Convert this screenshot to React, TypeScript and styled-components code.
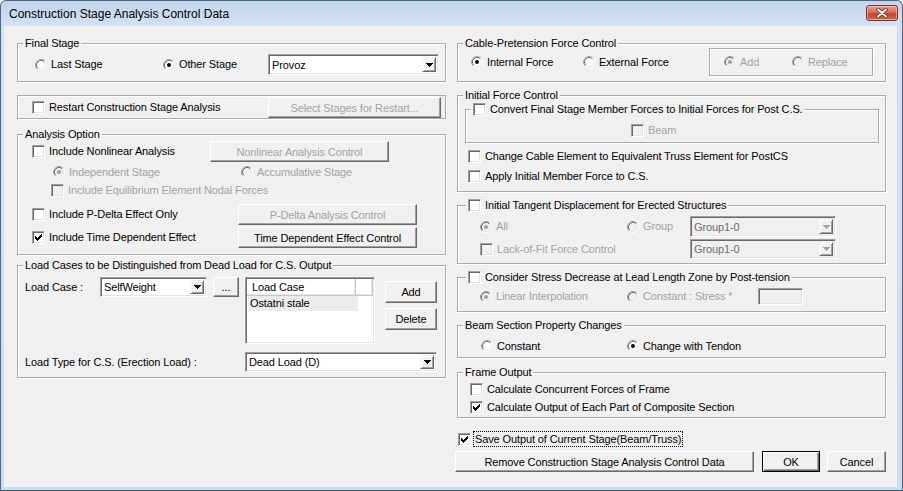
import React from 'react';
import styled, { createGlobalStyle, css } from 'styled-components';

const Global = createGlobalStyle`
  html, body { margin: 0; padding: 0; background: #ffffff; }
  body { font-family: "Liberation Sans", Tahoma, Arial, sans-serif; font-size: 11px; color: #000; letter-spacing: -0.12px; }
  * { box-sizing: border-box; }
`;

const Window = styled.div`
  width: 903px;
  height: 491px;
  display: flex;
  flex-direction: column;
  background: linear-gradient(#c2d5ed, #d2e1f3 24px, #cddced);
  border: 1px solid #52667f;
  border-bottom-color: #2f6070;
  border-radius: 6px 6px 0 0;
  overflow: hidden;
`;

const TitleBar = styled.div`
  height: 25px;
  flex-shrink: 0;
  display: flex;
  align-items: flex-start;
  justify-content: space-between;
  padding: 0 4px 0 8px;
`;

const Title = styled.div`
  font-size: 12px;
  letter-spacing: 0;
  line-height: 26px;
  color: #000;
  white-space: nowrap;
`;

const CloseBtn = styled.div`
  margin-top: 4px;
  width: 32px;
  height: 16px;
  border: 1px solid #7a3325;
  border-radius: 3px;
  background: linear-gradient(#e8a38f, #d0664d 50%, #c04528 55%, #d26a4c);
  box-shadow: inset 0 0 0 1px rgba(255, 220, 210, 0.55);
  display: flex;
  align-items: center;
  justify-content: center;
`;

const Client = styled.div`
  flex: 1;
  margin: 0 5px 3px 3px;
  background: #f0f0f0;
  display: grid;
  grid-template-columns: 429px 429px;
  column-gap: 11px;
  padding-left: 13px;
  align-items: start;
`;

const Col = styled.div`
  display: flex;
  flex-direction: column;
`;

const Group = styled.div<{ $h: number; $mt?: number; $ml?: number; $w?: number }>`
  height: ${p => p.$h}px;
  margin-top: ${p => p.$mt ?? 0}px;
  margin-left: ${p => p.$ml ?? 0}px;
  width: ${p => (p.$w ? `${p.$w}px` : 'auto')};
  flex-shrink: 0;
  border: 1px solid #ababab;
  box-shadow: inset 1px 1px 0 #ffffff, 1px 1px 0 #ffffff;
  display: flex;
  flex-direction: column;
`;

const Legend = styled.div<{ $ml?: number }>`
  margin: -7px 0 0 ${p => p.$ml ?? 5}px;
  padding: 0 2px;
  height: 13px;
  line-height: 13px;
  background: #f0f0f0;
  align-self: flex-start;
  display: flex;
  align-items: center;
  white-space: nowrap;
`;

const Row = styled.div<{ $mt?: number; $pl?: number; $h?: number }>`
  display: flex;
  align-items: center;
  flex-shrink: 0;
  margin-top: ${p => p.$mt ?? 0}px;
  padding-left: ${p => p.$pl ?? 0}px;
  height: ${p => p.$h ?? 16}px;
`;

const Opt = styled.div<{ $w?: number; $dis?: boolean }>`
  display: flex;
  align-items: center;
  gap: 4px;
  flex-shrink: 0;
  width: ${p => (p.$w ? `${p.$w}px` : 'auto')};
  color: ${p => (p.$dis ? '#a3a3a3' : '#000')};
  white-space: nowrap;
  line-height: 13px;
`;

const Box = styled.span<{ $dis?: boolean }>`
  width: 13px;
  height: 13px;
  flex-shrink: 0;
  background: ${p => (p.$dis ? '#f0f0f0' : '#ffffff')};
  border: 1px solid;
  border-color: #a0a0a0 #ffffff #ffffff #a0a0a0;
  box-shadow: inset 1px 1px 0 #696969, inset -1px -1px 0 #e3e3e3;
  display: flex;
  align-items: center;
  justify-content: center;
`;

const Focus = styled.span`
  outline: 1px dotted #000;
  outline-offset: 1px;
`;

const Btn = styled.button<{ $w: number; $h?: number; $def?: boolean }>`
  width: ${p => p.$w}px;
  height: ${p => p.$h ?? 21}px;
  flex-shrink: 0;
  padding: 0;
  margin: 0;
  font: inherit;
  font-size: 11px;
  letter-spacing: -0.12px;
  color: #000;
  background: #f0f0f0;
  border: 1px solid;
  border-color: #ffffff #696969 #696969 #ffffff;
  box-shadow: inset -1px -1px 0 #a0a0a0;
  white-space: nowrap;
  &:disabled {
    color: #a3a3a3;
  }
  ${p =>
    p.$def &&
    css`
      border-color: #000;
      box-shadow: inset 1px 1px 0 #ffffff, inset -1px -1px 0 #696969, inset -2px -2px 0 #a0a0a0;
    `}
`;

const Sunken = styled.div<{ $w: number; $h: number; $dis?: boolean }>`
  width: ${p => p.$w}px;
  height: ${p => p.$h}px;
  flex-shrink: 0;
  background: ${p => (p.$dis ? '#f0f0f0' : '#ffffff')};
  border: 1px solid;
  border-color: #a0a0a0 #ffffff #ffffff #a0a0a0;
  box-shadow: inset 1px 1px 0 #696969, inset -1px -1px 0 #e3e3e3;
  padding: 2px 2px 2px 2px;
  display: flex;
`;

const ComboText = styled.span<{ $dis?: boolean }>`
  flex: 1;
  display: flex;
  align-items: center;
  padding-left: 1px;
  color: ${p => (p.$dis ? '#6d6d6d' : '#000')};
  white-space: nowrap;
  overflow: hidden;
`;

const DropBtn = styled.span`
  width: 14px;
  flex-shrink: 0;
  background: #f0f0f0;
  border: 1px solid;
  border-color: #f0f0f0 #696969 #696969 #f0f0f0;
  box-shadow: inset 1px 1px 0 #ffffff, inset -1px -1px 0 #a0a0a0;
  display: flex;
  align-items: center;
  justify-content: center;
`;

const Spacer = styled.div<{ $w: number; $h?: number }>`
  width: ${p => p.$w}px;
  height: ${p => (p.$h !== undefined ? `${p.$h}px` : 'auto')};
  flex-shrink: 0;
`;

const Plain = styled.span<{ $w?: number; $mt?: number }>`
  width: ${p => (p.$w ? `${p.$w}px` : 'auto')};
  margin-top: ${p => p.$mt ?? 0}px;
  flex-shrink: 0;
  white-space: nowrap;
  line-height: 13px;
  align-self: ${p => (p.$mt !== undefined ? 'flex-start' : 'center')};
`;

const TopArea = styled.div<{ $mt: number; $pl: number }>`
  display: flex;
  align-items: flex-start;
  margin-top: ${p => p.$mt}px;
  padding-left: ${p => p.$pl}px;
`;

const List = styled.div`
  width: 130px;
  height: 67px;
  flex-shrink: 0;
  background: #ffffff;
  border: 1px solid;
  border-color: #a0a0a0 #ffffff #ffffff #a0a0a0;
  box-shadow: inset 1px 1px 0 #696969, inset -1px -1px 0 #e3e3e3;
  padding: 1px;
  display: flex;
  flex-direction: column;
`;

const ListHead = styled.div`
  display: flex;
  height: 17px;
  flex-shrink: 0;
`;

const HeadCell = styled.div<{ $w?: number }>`
  width: ${p => (p.$w ? `${p.$w}px` : 'auto')};
  flex: ${p => (p.$w ? '0 0 auto' : '1')};
  background: #ffffff;
  border-right: 1px solid #c8c8c8;
  border-bottom: 1px solid #c8c8c8;
  box-shadow: inset -1px -1px 0 #e5e5e5;
  padding-left: 5px;
  line-height: 16px;
  white-space: nowrap;
`;

const ListItem = styled.div`
  width: 110px;
  height: 15px;
  line-height: 15px;
  margin-left: 1px;
  padding-left: 2px;
  background: #ececec;
  white-space: nowrap;
`;

const BtnCol = styled.div`
  display: flex;
  flex-direction: column;
  margin-left: 10px;
`;

const BtnRow = styled.div`
  display: flex;
  align-items: center;
  margin-top: 4px;
  margin-left: -2px;
`;

const Arrow = ({ dis }: { dis?: boolean }) => (
  <svg width="7" height="4" viewBox="0 0 7 4" shapeRendering="crispEdges">
    <path d="M0 0h7v1H0zM1 1h5v1H1zM2 2h3v1H2zM3 3h1v1H3z" fill={dis ? '#a0a0a0' : '#000'} />
  </svg>
);

const Check = ({ dis }: { dis?: boolean }) => (
  <svg width="7" height="7" viewBox="0 0 7 7" shapeRendering="crispEdges">
    <path
      d="M6 0h1v1h-1zM5 1h2v1h-2zM0 2h1v1h-1zM4 2h3v1h-3zM0 3h2v1h-2zM3 3h3v1h-3zM0 4h5v1h-5zM1 5h3v1h-3zM2 6h1v1h-1z"
      fill={dis ? '#a0a0a0' : '#000'}
    />
  </svg>
);

const RadioIcon = ({ on, dis }: { on?: boolean; dis?: boolean }) => (
  <svg width="12" height="12" viewBox="0 0 12 12" style={{ flexShrink: 0 }}>
    <circle cx="6" cy="6" r="5" fill={dis ? '#f0f0f0' : '#ffffff'} />
    <path d="M2.11 9.89A5.5 5.5 0 0 1 9.89 2.11" stroke="#a0a0a0" fill="none" />
    <path d="M9.89 2.11A5.5 5.5 0 0 1 2.11 9.89" stroke="#ffffff" fill="none" />
    <path d="M2.82 9.18A4.5 4.5 0 0 1 9.18 2.82" stroke="#696969" fill="none" />
    <path d="M9.18 2.82A4.5 4.5 0 0 1 2.82 9.18" stroke="#e3e3e3" fill="none" />
    {on && <circle cx="6" cy="6" r="2" fill={dis ? '#a0a0a0' : '#000'} />}
  </svg>
);

type OptProps = { label: React.ReactNode; on?: boolean; dis?: boolean; w?: number };

const Radio = ({ label, on, dis, w }: OptProps) => (
  <Opt $w={w} $dis={dis}>
    <RadioIcon on={on} dis={dis} />
    <span>{label}</span>
  </Opt>
);

const CheckBox = ({ label, on, dis, w }: OptProps) => (
  <Opt $w={w} $dis={dis}>
    <Box $dis={dis}>{on && <Check dis={dis} />}</Box>
    <span>{label}</span>
  </Opt>
);

const Combo = ({ w, h, value, dis }: { w: number; h: number; value: string; dis?: boolean }) => (
  <Sunken $w={w} $h={h} $dis={dis}>
    <ComboText $dis={dis}>{value}</ComboText>
    <DropBtn>
      <Arrow dis={dis} />
    </DropBtn>
  </Sunken>
);

const CloseX = () => (
  <svg width="12" height="10" viewBox="0 0 12 10">
    <path d="M2 1.5L10 8.5M10 1.5L2 8.5" stroke="#5a1e12" strokeWidth="3.4" strokeLinecap="round" />
    <path d="M2 1.5L10 8.5M10 1.5L2 8.5" stroke="#ffffff" strokeWidth="2" strokeLinecap="round" />
  </svg>
);

export default function App() {
  return (
    <>
      <Global />
      <Window>
        <TitleBar>
          <Title>Construction Stage Analysis Control Data</Title>
          <CloseBtn>
            <CloseX />
          </CloseBtn>
        </TitleBar>
        <Client>
          <Col>
            <Group $h={39} $mt={17}>
              <Legend>Final Stage</Legend>
              <Row $mt={4} $pl={17} $h={21}>
                <Radio label="Last Stage" w={128} />
                <Radio label="Other Stage" on w={105} />
                <Combo w={171} h={21} value="Provoz" />
              </Row>
            </Group>

            <Group $h={24} $mt={13}>
              <Row $mt={1} $pl={14} $h={21}>
                <CheckBox label="Restart Construction Stage Analysis" w={236} />
                <Btn $w={173} disabled>
                  Select Stages for Restart...
                </Btn>
              </Row>
            </Group>

            <Group $h={121} $mt={15}>
              <Legend>Analysis Option</Legend>
              <Row $mt={0} $pl={14} $h={21}>
                <CheckBox label="Include Nonlinear Analysis" w={178} />
                <Btn $w={179} disabled>
                  Nonlinear Analysis Control
                </Btn>
              </Row>
              <Row $mt={2} $pl={35}>
                <Radio label="Independent Stage" on dis w={188} />
                <Radio label="Accumulative Stage" dis />
              </Row>
              <Row $mt={2} $pl={33}>
                <CheckBox label="Include Equilibrium Element Nodal Forces" dis />
              </Row>
              <Row $mt={6} $pl={14} $h={21}>
                <CheckBox label="Include P-Delta Effect Only" w={206} />
                <Btn $w={179} disabled>
                  P-Delta Analysis Control
                </Btn>
              </Row>
              <Row $mt={2} $pl={14} $h={21}>
                <CheckBox label="Include Time Dependent Effect" on w={206} />
                <Btn $w={179}>Time Dependent Effect Control</Btn>
              </Row>
            </Group>

            <Group $h={113} $mt={10}>
              <Legend>Load Cases to be Distinguished from Dead Load for C.S. Output</Legend>
              <TopArea $mt={5} $pl={7}>
                <Plain $w={75} $mt={4}>
                  Load Case :
                </Plain>
                <Combo w={107} h={20} value="SelfWeight" />
                <Spacer $w={6} />
                <Btn $w={26} $h={20}>
                  ...
                </Btn>
                <Spacer $w={6} />
                <List>
                  <ListHead>
                    <HeadCell>Load Case</HeadCell>
                    <HeadCell $w={17} />
                  </ListHead>
                  <ListItem>Ostatni stale</ListItem>
                </List>
                <BtnCol>
                  <Spacer $w={52} $h={4} />
                  <Btn $w={52} $h={22}>
                    Add
                  </Btn>
                  <Spacer $w={52} $h={5} />
                  <Btn $w={52} $h={22}>
                    Delete
                  </Btn>
                </BtnCol>
              </TopArea>
              <Row $mt={8} $pl={7} $h={20}>
                <Plain $w={220}>Load Type for C.S. (Erection Load) :</Plain>
                <Combo w={192} h={20} value="Dead Load (D)" />
              </Row>
            </Group>
          </Col>

          <Col>
            <Group $h={39} $mt={17}>
              <Legend>Cable-Pretension Force Control</Legend>
              <Row $mt={-2} $pl={13} $h={28}>
                <Radio label="Internal Force" on w={112} />
                <Radio label="External Force" w={126} />
                <Group $h={28} $w={164}>
                  <Row $pl={14} $h={26}>
                    <Radio label="Add" on dis w={68} />
                    <Radio label="Replace" dis />
                  </Row>
                </Group>
              </Row>
            </Group>

            <Group $h={97} $mt={13}>
              <Legend>Initial Force Control</Legend>
              <Group $h={34} $mt={7} $ml={7} $w={414}>
                <Legend $ml={5}>
                  <CheckBox label="Convert Final Stage Member Forces to Initial Forces for Post C.S." />
                </Legend>
                <Row $mt={6} $pl={165}>
                  <CheckBox label="Beam" dis />
                </Row>
              </Group>
              <Row $mt={5} $pl={10}>
                <CheckBox label="Change Cable Element to Equivalent Truss Element for PostCS" />
              </Row>
              <Row $mt={4} $pl={10}>
                <CheckBox label="Apply Initial Member Force to C.S." />
              </Row>
            </Group>

            <Group $h={59} $mt={13}>
              <Legend $ml={8}>
                <CheckBox label="Initial Tangent Displacement for Erected Structures" />
              </Legend>
              <Row $mt={4} $pl={22} $h={21}>
                <Radio label="All" on dis w={147} />
                <Radio label="Group" dis w={63} />
                <Combo w={146} h={21} value="Group1-0" dis />
              </Row>
              <Row $mt={2} $pl={22} $h={20}>
                <CheckBox label="Lack-of-Fit Force Control" dis w={210} />
                <Combo w={146} h={20} value="Group1-0" dis />
              </Row>
            </Group>

            <Group $h={35} $mt={13}>
              <Legend $ml={8}>
                <CheckBox label="Consider Stress Decrease at Lead Length Zone by Post-tension" />
              </Legend>
              <Row $mt={4} $pl={22} $h={17}>
                <Radio label="Linear Interpolation" on dis w={147} />
                <Radio label="Constant : Stress *" dis w={131} />
                <Sunken $w={45} $h={17} $dis />
              </Row>
            </Group>

            <Group $h={33} $mt={13}>
              <Legend>Beam Section Property Changes</Legend>
              <Row $mt={6} $pl={23}>
                <Radio label="Constant" w={146} />
                <Radio label="Change with Tendon" on />
              </Row>
            </Group>

            <Group $h={46} $mt={14}>
              <Legend>Frame Output</Legend>
              <Row $mt={2} $pl={12}>
                <CheckBox label="Calculate Concurrent Forces of Frame" />
              </Row>
              <Row $mt={2} $pl={12}>
                <CheckBox label="Calculate Output of Each Part of Composite Section" on />
              </Row>
            </Group>

            <Row $mt={13} $pl={1}>
              <CheckBox label={<Focus>Save Output of Current Stage(Beam/Truss)</Focus>} on />
            </Row>

            <BtnRow>
              <Btn $w={299}>Remove Construction Stage Analysis Control Data</Btn>
              <Spacer $w={8} />
              <Btn $w={58} $def>
                OK
              </Btn>
              <Spacer $w={7} />
              <Btn $w={59}>Cancel</Btn>
            </BtnRow>
          </Col>
        </Client>
      </Window>
    </>
  );
}
